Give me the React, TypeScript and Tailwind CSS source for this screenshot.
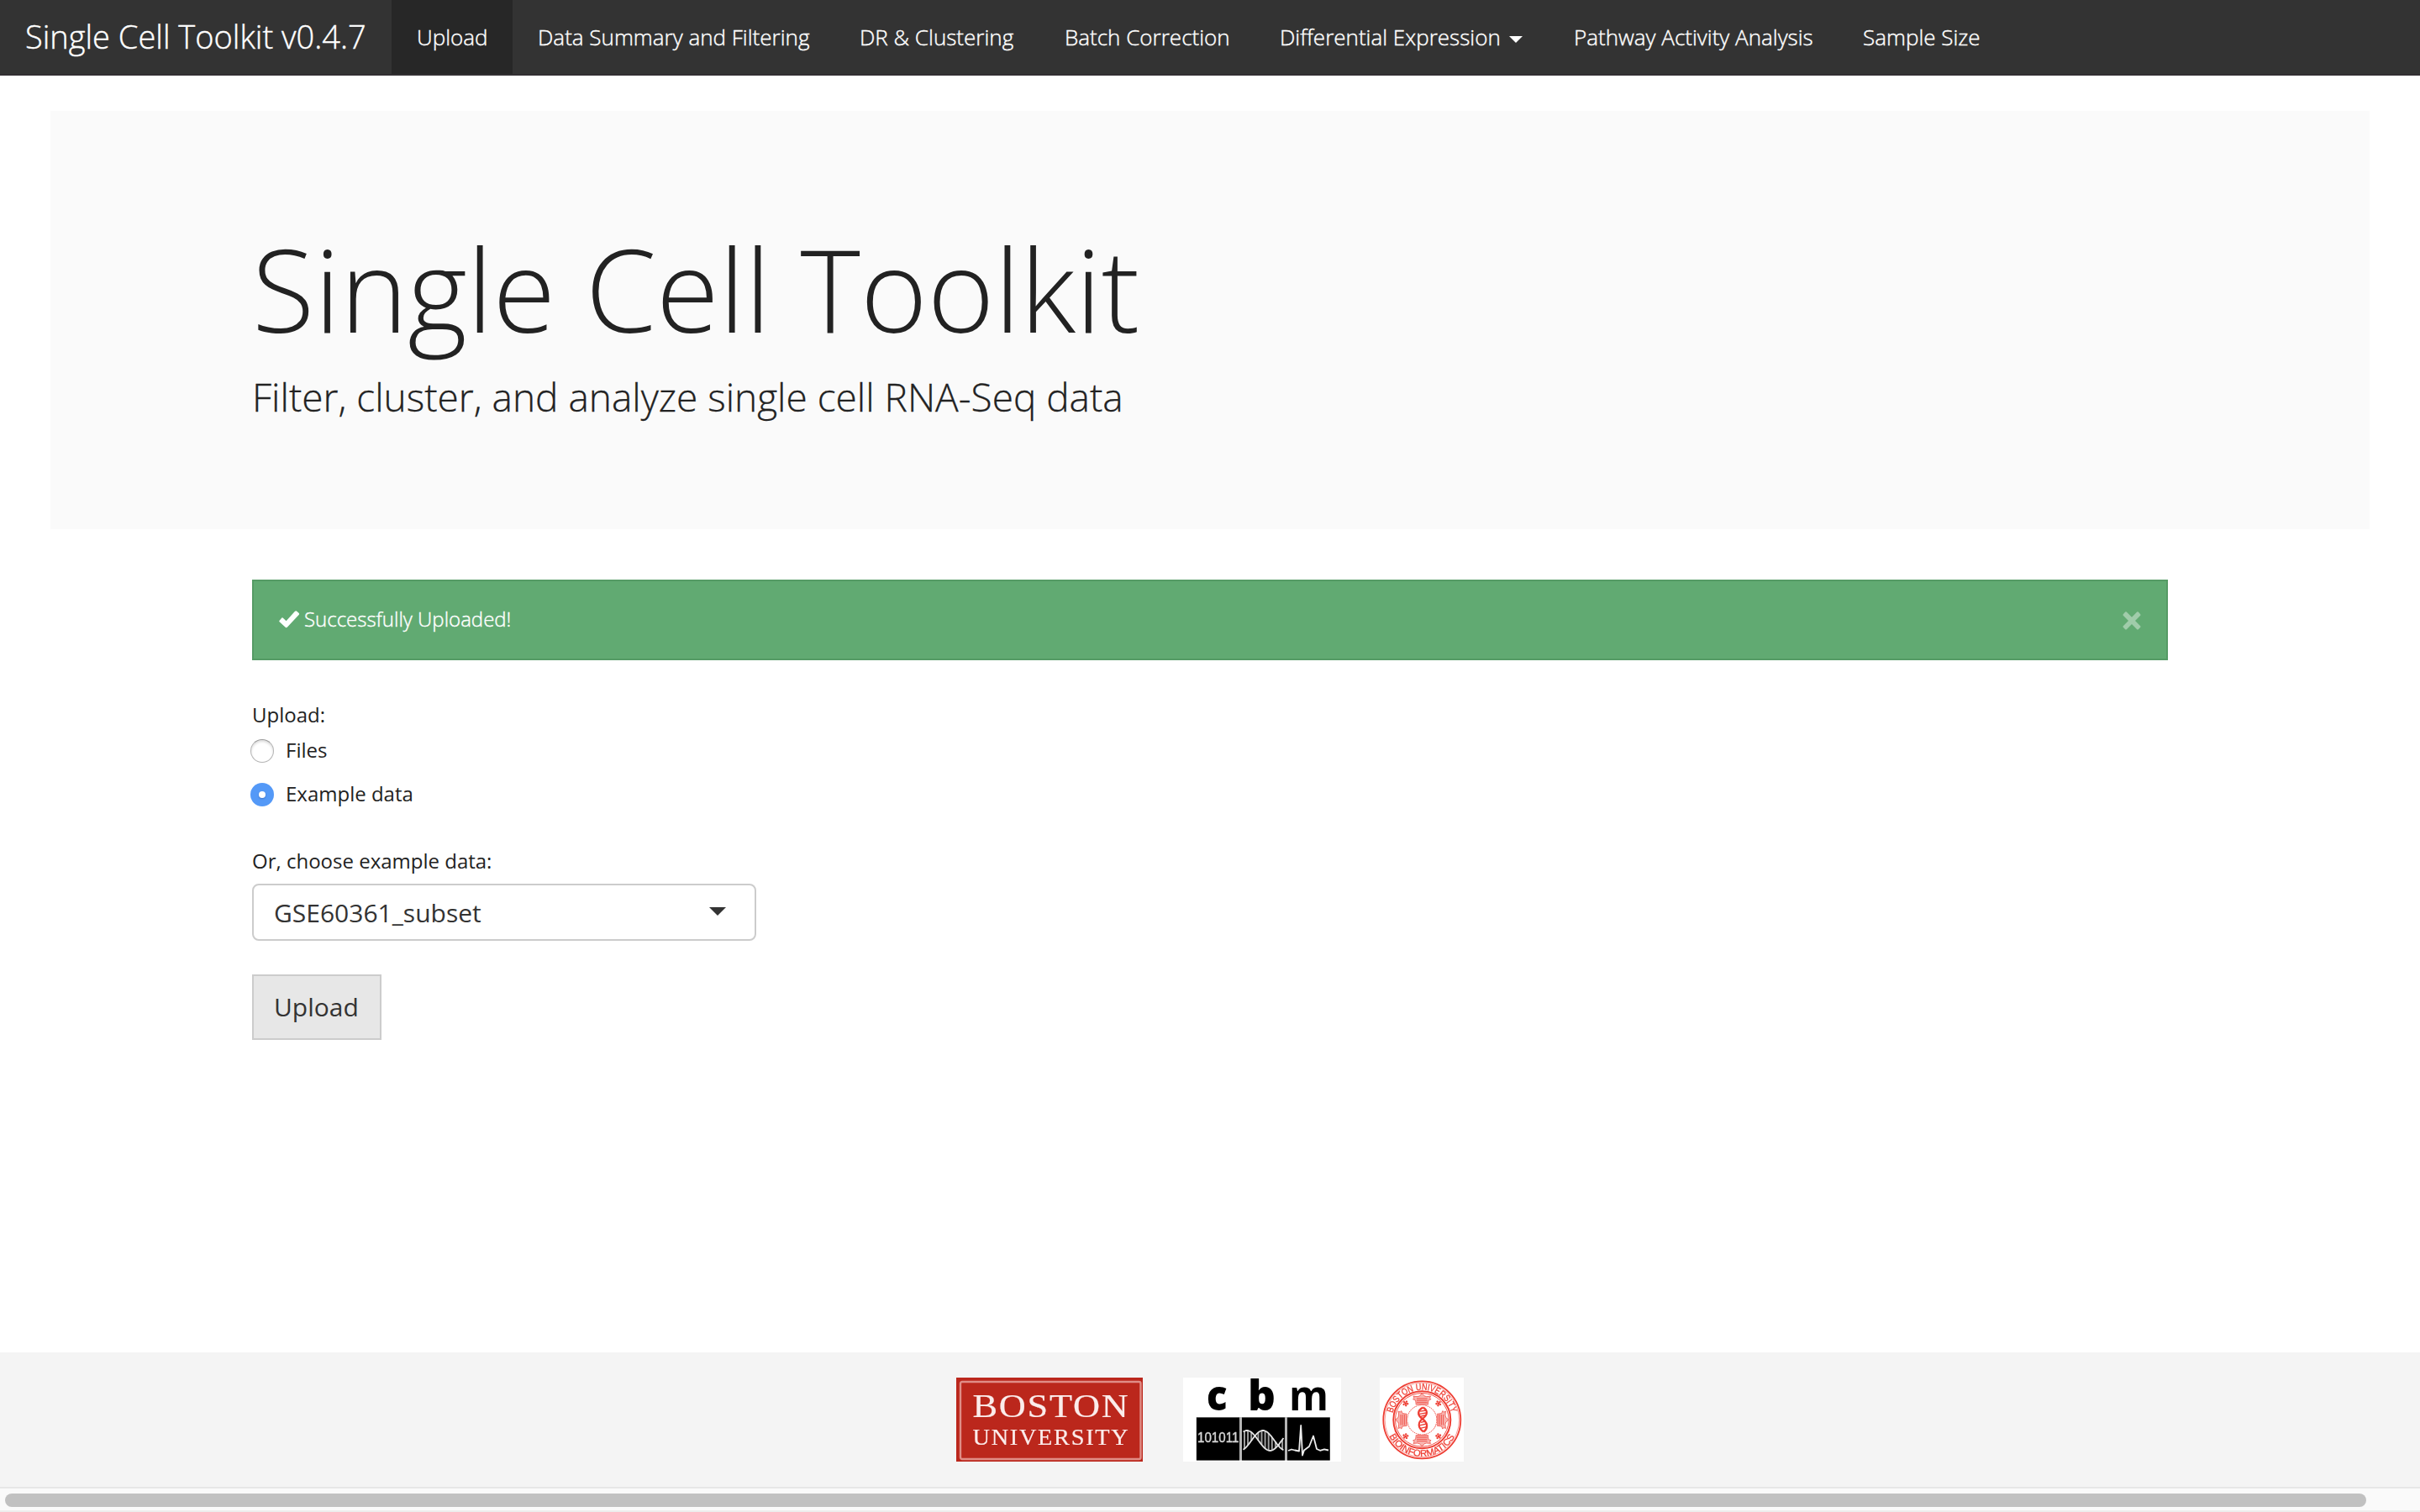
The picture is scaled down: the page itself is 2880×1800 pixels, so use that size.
import React from "react";

const NAV_LINKS: { label: string; width: string; active?: boolean; menu?: boolean }[] = [
  { label: "Upload", width: "w-[144px]", active: true },
  { label: "Data Summary and Filtering", width: "w-[383px]" },
  { label: "DR & Clustering", width: "w-[244px]" },
  { label: "Batch Correction", width: "w-[256px]" },
  { label: "Differential Expression", width: "w-[350px]", menu: true },
  { label: "Pathway Activity Analysis", width: "w-[344px]" },
  { label: "Sample Size", width: "w-[200px]" },
];

function Navbar() {
  return (
    <nav className="flex h-[90px] border-b-2 border-[#322f32] bg-[#333333] font-light text-white [-webkit-text-stroke:0.4px_white]">
      <div className="flex w-[466px] shrink-0 items-center pb-[3px] pl-[30px] text-[38px] leading-none whitespace-nowrap">
        Single Cell Toolkit v0.4.7
      </div>
      {NAV_LINKS.map((link) => (
        <a
          key={link.label}
          className={`flex shrink-0 items-center pb-px pl-[30px] text-[26px] leading-none whitespace-nowrap ${link.width} ${
            link.active ? "bg-[#272727]" : ""
          }`}
        >
          {link.label}
          {link.menu && (
            <svg className="mt-[7px] ml-[10px] h-2 w-4" viewBox="0 0 16 8">
              <path d="M0 0h16l-8 8z" fill="#fff" />
            </svg>
          )}
        </a>
      ))}
    </nav>
  );
}

function CheckIcon() {
  return (
    <svg className="h-[21px] w-[25px] shrink-0" viewBox="0 0 25 21">
      <path
        fill="#fff"
        d="M.4 12 3.4 8.4Q4 8 4.6 8.4L8.6 12.2 19 .7Q20.3-.3 21.3.7L23.8 3Q24.4 3.8 23.8 4.7L10 19.5Q8.6 20.8 7.4 19.5L.6 13.2Q0 12.6.4 12z"
      />
    </svg>
  );
}

function CloseIcon() {
  return (
    <svg className="mt-[3px] h-[22px] w-[22px] shrink-0 opacity-40" viewBox="0 0 22 22">
      <path
        fill="#fff"
        d="M3.2.6Q4 0 4.8.6L11 6.8 17.2.6Q18 0 18.8.6L21.2 3.2Q21.8 4 21.2 4.8L15 11 21.2 17.2Q21.8 18 21.2 18.8L18.8 21.2Q18 21.8 17.2 21.2L11 15 4.8 21.2Q4 21.8 3.2 21.2L.8 18.8Q.2 18 .8 17.2L7 11 .8 4.8Q.2 4 .8 3.2z"
      />
    </svg>
  );
}

function Radio({ label, checked }: { label: string; checked?: boolean }) {
  return (
    <label className="-ml-0.5 flex h-7 items-center">
      {checked ? (
        <span className="flex size-7 items-center justify-center rounded-full bg-[#5499f7]">
          <span className="size-2 rounded-full bg-white shadow-[0_1px_2px_rgba(0,0,60,0.25)]" />
        </span>
      ) : (
        <span className="size-7 rounded-full border border-[#b4b4b4] border-t-[#9a9a9a] bg-white shadow-[inset_0_2px_3px_rgba(0,0,0,0.14)]" />
      )}
      <span className="ml-[14px] pb-[3px] leading-none">{label}</span>
    </label>
  );
}

function BostonLogo() {
  return (
    <svg className="h-[100px] w-[222px] bg-[#bb271c]" viewBox="0 0 222 100">
      <g className="blur-[0.5px]">
        <rect x="5" y="5" width="214.5" height="92" rx="2" fill="none" stroke="#e08d86" strokeWidth="2.4" />
        <g fill="#fbeceb" stroke="#fbeceb" strokeWidth="0.2" letterSpacing="1.6" fontFamily="'Liberation Serif', serif">
          <text x="19.5" y="47" fontSize="40" textLength="187" lengthAdjust="spacingAndGlyphs">BOSTON</text>
          <text x="19.5" y="80" fontSize="26.5" textLength="187" lengthAdjust="spacingAndGlyphs">UNIVERSITY</text>
        </g>
      </g>
    </svg>
  );
}

const strand = (x: number, peak: number) => 75 - 12 * Math.cos((Math.PI * (x - peak)) / 27.5);

function strandPath(peak: number) {
  const points: string[] = [];
  for (let x = 71.5; x <= 120; x += 1) points.push(`${x} ${strand(x, peak).toFixed(2)}`);
  return `M${points.join("L")}`;
}

const RUNGS = Array.from({ length: 12 }, (_, i) => 73 + i * 4.1);

function CbmLogo() {
  return (
    <svg className="h-[100px] w-[188px] overflow-visible bg-white" viewBox="0 0 188 100">
      <g className="blur-[0.5px]">
        <g fontFamily="'Open Sans', sans-serif" fontWeight="800" fontSize="49" fill="#000">
          <text x="28" y="39" textLength="24.5" lengthAdjust="spacingAndGlyphs">c</text>
          <text x="77" y="39" textLength="33" lengthAdjust="spacingAndGlyphs">b</text>
          <text x="126" y="39" fontWeight="700" textLength="47" lengthAdjust="spacingAndGlyphs">m</text>
        </g>
        <path d="M15.5 47h159.5v51.5h-159.5z" fill="#b5b5b5" />
        <path d="M16 47.5h51v51h-51zM70 47.5h51v51h-51zM124 47.5h50.7v51h-50.7z" fill="#000" />
        <text x="17" y="77" fontSize="16.5" fill="#d6d6d6" stroke="#d6d6d6" strokeWidth="0.4" textLength="49.5" lengthAdjust="spacingAndGlyphs" fontFamily="'Liberation Sans', sans-serif">
          101011
        </text>
        {RUNGS.map((x) => (
          <line key={x} x1={x} x2={x} y1={strand(x, 76)} y2={strand(x, 95)} stroke="#9d9d9d" strokeWidth="2" />
        ))}
        <path d={strandPath(76)} fill="none" stroke="#e4e4e4" strokeWidth="1.8" />
        <path d={strandPath(95)} fill="none" stroke="#e4e4e4" strokeWidth="1.8" />
        <path
          d="M125 87 129 85.5 133 86.5 138 87.5 140.2 57 142 92.5 144 86.5 150 82 155 69.5 159 85 163 86.8 168 85.3 173 86.5"
          fill="none"
          stroke="#ededed"
          strokeWidth="1.8"
          strokeLinejoin="round"
        />
      </g>
    </svg>
  );
}

function SealLogo() {
  return (
    <svg className="h-[100px] w-[100px] bg-white" viewBox="0 0 100 100">
      <defs>
        <path id="seal-top" d="M15.4 42.2A35.9 35.9 0 0 1 85.2 42.2" />
        <path id="seal-bottom" d="M11.3 69.5A43.4 43.4 0 0 0 89.3 69.5" />
      </defs>
      <g className="blur-[0.3px]" fill="none" stroke="#ee3d33">
        <circle cx="50.3" cy="50.3" r="46" strokeWidth="1.8" />
        <circle cx="50.3" cy="50.3" r="44.2" strokeWidth="0.5" />
        <circle cx="50.3" cy="50.3" r="34" strokeWidth="2" />
        <circle cx="50.3" cy="50.3" r="31.8" strokeWidth="0.9" />
        <g fill="#ee3d33" strokeWidth="0.3" fontFamily="'Liberation Sans', sans-serif" fontSize="11">
          <text>
            <textPath href="#seal-top" startOffset="0" textLength="95" lengthAdjust="spacingAndGlyphs">BOSTON UNIVERSITY</textPath>
          </text>
          <text>
            <textPath href="#seal-bottom" startOffset="0" textLength="96" lengthAdjust="spacingAndGlyphs">BIOINFORMATICS</textPath>
          </text>
        </g>
        <circle cx="50.3" cy="50.3" r="17.6" strokeWidth="1" strokeDasharray="1.6 0.8" />
        {[0, 90, 180, 270].map((angle) => (
          <g key={angle} transform={`rotate(${angle} 50.3 50.3)`}>
            <path
              d="M43.3 32.5 42.6 27 39.6 25.8 41 24.2 40 22.2 45 22.6 47.6 21.8 50.3 18.6 53 21.8 55.6 22.6 60.6 22.2 59.6 24.2 61 25.8 58 27 57.3 32.5"
              fill="#f8b4b0"
              strokeWidth="0.7"
            />
            <path d="M44 25h12.6M44 27.2h12.6M44 29.4h12.6M44 31.6h12.6" strokeWidth="0.8" />
          </g>
        ))}
        {[45, 135, 225, 315].map((angle) => (
          <g key={angle} transform={`rotate(${angle} 50.3 50.3) translate(50.3 22.6)`} fill="#ee3d33" stroke="none">
            <circle cx="0" cy="0" r="1.4" />
            <circle cx="-2.4" cy="-0.6" r="1.2" />
            <circle cx="2.4" cy="-0.6" r="1.2" />
            <circle cx="0" cy="-2.2" r="1.2" />
            <circle cx="-1.4" cy="2.1" r="1.2" />
            <circle cx="1.4" cy="2.1" r="1.2" />
          </g>
        ))}
        <path d="M51.5 35.5C45 39 44.5 44 50 48.5 56.5 53 58.5 59 52.5 64.5" strokeWidth="2.4" />
        <path d="M51.5 35.5C57.5 39 57.5 44 51 48.8 45.5 53 44.5 60 52.5 64.5" strokeWidth="2.2" />
        <path d="M48 40.2 55.5 39M47.5 43.4 55.3 42M49.2 46 54 45M48.8 53.4 54.5 52M47.5 56.8 56 55M48 60.4 56 58.6" strokeWidth="1.3" />
      </g>
    </svg>
  );
}

export default function App() {
  return (
    <div className="flex h-[1800px] w-[2880px] flex-col overflow-hidden bg-white font-['Open_Sans',sans-serif] text-[#222222]">
      <Navbar />

      <header className="mx-[60px] mt-[42px] h-[498px] bg-[#fafafa] pt-[138px] pl-[240px] font-light">
        <h1 className="h-[148px] text-[136px] leading-[148px]">Single Cell Toolkit</h1>
        <p className="mt-[17px] text-[46px] leading-[74px] [-webkit-text-stroke:0.3px_#222222]">
          Filter, cluster, and analyze single cell RNA-Seq data
        </p>
      </header>

      <main className="mx-[300px] mt-[60px] flex grow flex-col items-start text-[24px]">
        <div className="flex h-24 w-full items-center justify-between border-2 border-[#559b65] bg-[#61aa72] pr-[30px] pb-px pl-[30px] font-light text-white">
          <div className="flex items-center">
            <CheckIcon />
            <span className="ml-[5px] pb-0.5 leading-none [-webkit-text-stroke:0.4px_white]">Successfully Uploaded!</span>
          </div>
          <CloseIcon />
        </div>

        <div className="mt-[47px] h-9 leading-9">Upload:</div>
        <div className="mt-[11px] flex flex-col gap-6">
          <Radio label="Files" />
          <Radio label="Example data" checked />
        </div>

        <div className="mt-[47px] h-9 leading-9">Or, choose example data:</div>
        <div className="mt-[9px] flex h-[68px] w-[600px] items-center justify-between rounded-lg border-2 border-[#cccccc] pr-[34px] pl-6 text-[30px] leading-none text-[#333333]">
          <span className="pt-px">GSE60361_subset</span>
          <svg className="mb-0.5 h-[10px] w-5" viewBox="0 0 20 10">
            <path d="M0 0h20L10 10z" fill="#333" />
          </svg>
        </div>
        <button className="mt-10 flex h-[78px] w-[154px] items-center border-2 border-[#cccccc] bg-[#e7e7e7] pb-px pl-6 text-[30px] leading-none text-[#333333]">
          Upload
        </button>
      </main>

      <footer className="flex h-[160px] shrink-0 items-start bg-[#f4f4f4] pt-[30px] pl-[1138px]">
        <BostonLogo />
        <div className="ml-12">
          <CbmLogo />
        </div>
        <div className="ml-[46px]">
          <SealLogo />
        </div>
      </footer>

      <div className="h-[30px] shrink-0 border-t-2 border-b-2 border-t-[#e7e7e7] border-b-[#ededed] bg-[#fafafa] pt-1.5 pl-1.5">
        <div className="h-4 w-[2810px] rounded-full bg-[#c1c1c1]" />
      </div>
    </div>
  );
}
